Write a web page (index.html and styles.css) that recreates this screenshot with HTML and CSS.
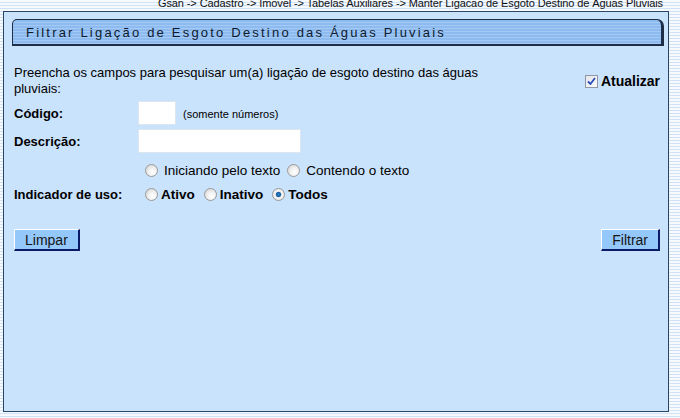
FILE: index.html
```html
<!DOCTYPE html>
<html lang="pt-BR">
<head>
    <title>Filtrar Ligação de Esgoto Destino das Águas Pluviais</title>
    <meta charset="utf-8">
    <link rel="stylesheet" href="styles.css">
</head>
<body>
    <div class="breadcrumb">Gsan -&gt; Cadastro -&gt; Imovel -&gt; Tabelas Auxiliares -&gt; Manter Ligacao de Esgoto Destino de Águas Pluviais</div>

    <div class="panel">
        <div class="titlebar">Filtrar Ligação de Esgoto Destino das Águas Pluviais</div>

        <form class="content">
            <div class="intro">
                <p class="intro-text">Preencha os campos para pesquisar um(a) ligação de esgoto destino das águas pluviais:</p>
                <label class="refresh">
                    <span class="checkbox">
                        <svg width="9" height="9" viewBox="0 0 9 9"><path d="M1 4.5 L3.5 7 L8 1" fill="none" stroke="#2b4bb8" stroke-width="1.8"/></svg>
                    </span>
                    Atualizar
                </label>
            </div>

            <div class="row">
                <label class="lbl" for="codigo">Código:</label>
                <div class="field">
                    <input class="txt txt-code" id="codigo" type="text">
                    <span class="hint">(somente números)</span>
                </div>
            </div>

            <div class="row">
                <label class="lbl" for="descricao">Descrição:</label>
                <div class="field">
                    <input class="txt txt-desc" id="descricao" type="text">
                </div>
            </div>

            <div class="row row-opts">
                <span class="lbl"></span>
                <div class="field">
                    <label class="opt opt-plain"><input type="radio" name="tipo">Iniciando pelo texto</label>
                    <label class="opt opt-plain"><input type="radio" name="tipo">Contendo o texto</label>
                </div>
            </div>

            <div class="row row-uso">
                <span class="lbl">Indicador de uso:</span>
                <div class="field">
                    <label class="opt opt-bold"><input type="radio" name="uso">Ativo</label>
                    <label class="opt opt-bold"><input type="radio" name="uso">Inativo</label>
                    <label class="opt opt-bold"><input type="radio" name="uso" checked>Todos</label>
                </div>
            </div>

            <div class="actions">
                <button class="btn" type="button">Limpar</button>
                <button class="btn" type="button">Filtrar</button>
            </div>
        </form>
    </div>
</body>
</html>
```

FILE: styles.css
```css
* {
    box-sizing: border-box;
    margin: 0;
    padding: 0;
}

body {
    font-family: "Liberation Sans", Arial, sans-serif;
    font-size: 13px;
    color: #000;
    background: repeating-linear-gradient(to bottom, #f6fafe 0, #f6fafe 2px, #cfe2f6 2px, #cfe2f6 3px);
    height: 418px;
    overflow: hidden;
}

.breadcrumb {
    height: 11px;
    font-size: 11px;
    line-height: 11px;
    margin-top: -2px;
    margin-bottom: 2px;
    padding-right: 17px;
    text-align: right;
    letter-spacing: -0.1px;
    color: #111;
}

.panel {
    margin-left: 3px;
    width: 666px;
    height: 401px;
    background: #cae3fc;
    border: 1px solid #2b4765;
    padding: 7px 0 0 8px;
}

.titlebar {
    width: 652px;
    height: 27px;
    padding: 5px 0 0 13px;
    background: repeating-linear-gradient(to bottom, #8dbbef 0, #8dbbef 2px, #a3c9f4 2px, #a3c9f4 3px);
    border: 1px solid #1e2e48;
    border-right-width: 3px;
    border-bottom-width: 2px;
    border-radius: 5px 7px 0 0;
    font-size: 13px;
    letter-spacing: 2.2px;
    color: #0d1a2e;
}

.content {
    padding: 0 8px 0 2px;
}

.intro {
    display: flex;
    justify-content: space-between;
    align-items: center;
    margin-top: 19px;
}

.intro-text {
    width: 480px;
    line-height: 16px;
}

.refresh {
    display: flex;
    align-items: center;
    gap: 3px;
    font-weight: bold;
    font-size: 14px;
}

.checkbox {
    width: 13px;
    height: 13px;
    border: 1px solid #8d97a6;
    background: linear-gradient(135deg, #e4e6ea, #fafafa);
    display: flex;
    align-items: center;
    justify-content: center;
}

.row {
    display: flex;
    align-items: center;
    height: 24px;
    margin-top: 4px;
}

.row-opts {
    margin-top: 5px;
}

.row-uso {
    margin-top: 0;
}

.lbl {
    width: 124px;
    font-weight: bold;
}

.field {
    display: flex;
    align-items: center;
}

.txt {
    height: 24px;
    border: 1px solid #dde5ee;
    background: #fff;
    font: inherit;
}

.txt-code {
    width: 38px;
}

.txt-desc {
    width: 163px;
}

.hint {
    font-size: 11px;
    margin-left: 7px;
    padding-top: 2px;
}

.opt {
    display: flex;
    align-items: center;
    font-size: 13.5px;
}

.opt input {
    appearance: none;
    width: 13px;
    height: 13px;
    border-radius: 50%;
    border: 1px solid #9a9a9a;
    background: radial-gradient(circle at 60% 65%, #ffffff 0, #f4f4f4 35%, #cfcfcf 100%);
}

.opt input:checked {
    background: radial-gradient(circle at 50% 50%, #2a86cf 0, #1a5f9e 28%, #e9eef2 40%, #f2f2f2 55%, #cfcfcf 100%);
}

.opt-plain input {
    margin: 0 6px 0 7px;
}

.opt-plain + .opt-plain input {
    margin-left: 1px;
}

.opt-plain:first-child {
    margin-right: 6px;
}

.opt-bold {
    font-weight: bold;
    margin-right: 9px;
}

.opt-bold input {
    margin-right: 3px;
}

.opt-bold:first-child input {
    margin-left: 7px;
}

.actions {
    display: flex;
    justify-content: space-between;
    margin-top: 23px;
}

.btn {
    height: 22px;
    padding: 0 10px;
    background: #94c8fb;
    border: 1px solid;
    border-color: #ffffff #0b1a66 #0b1a66 #ffffff;
    border-width: 1px 2px 2px 1px;
    font-family: "Liberation Sans", Arial, sans-serif;
    font-size: 14px;
    color: #141414;
}
```
